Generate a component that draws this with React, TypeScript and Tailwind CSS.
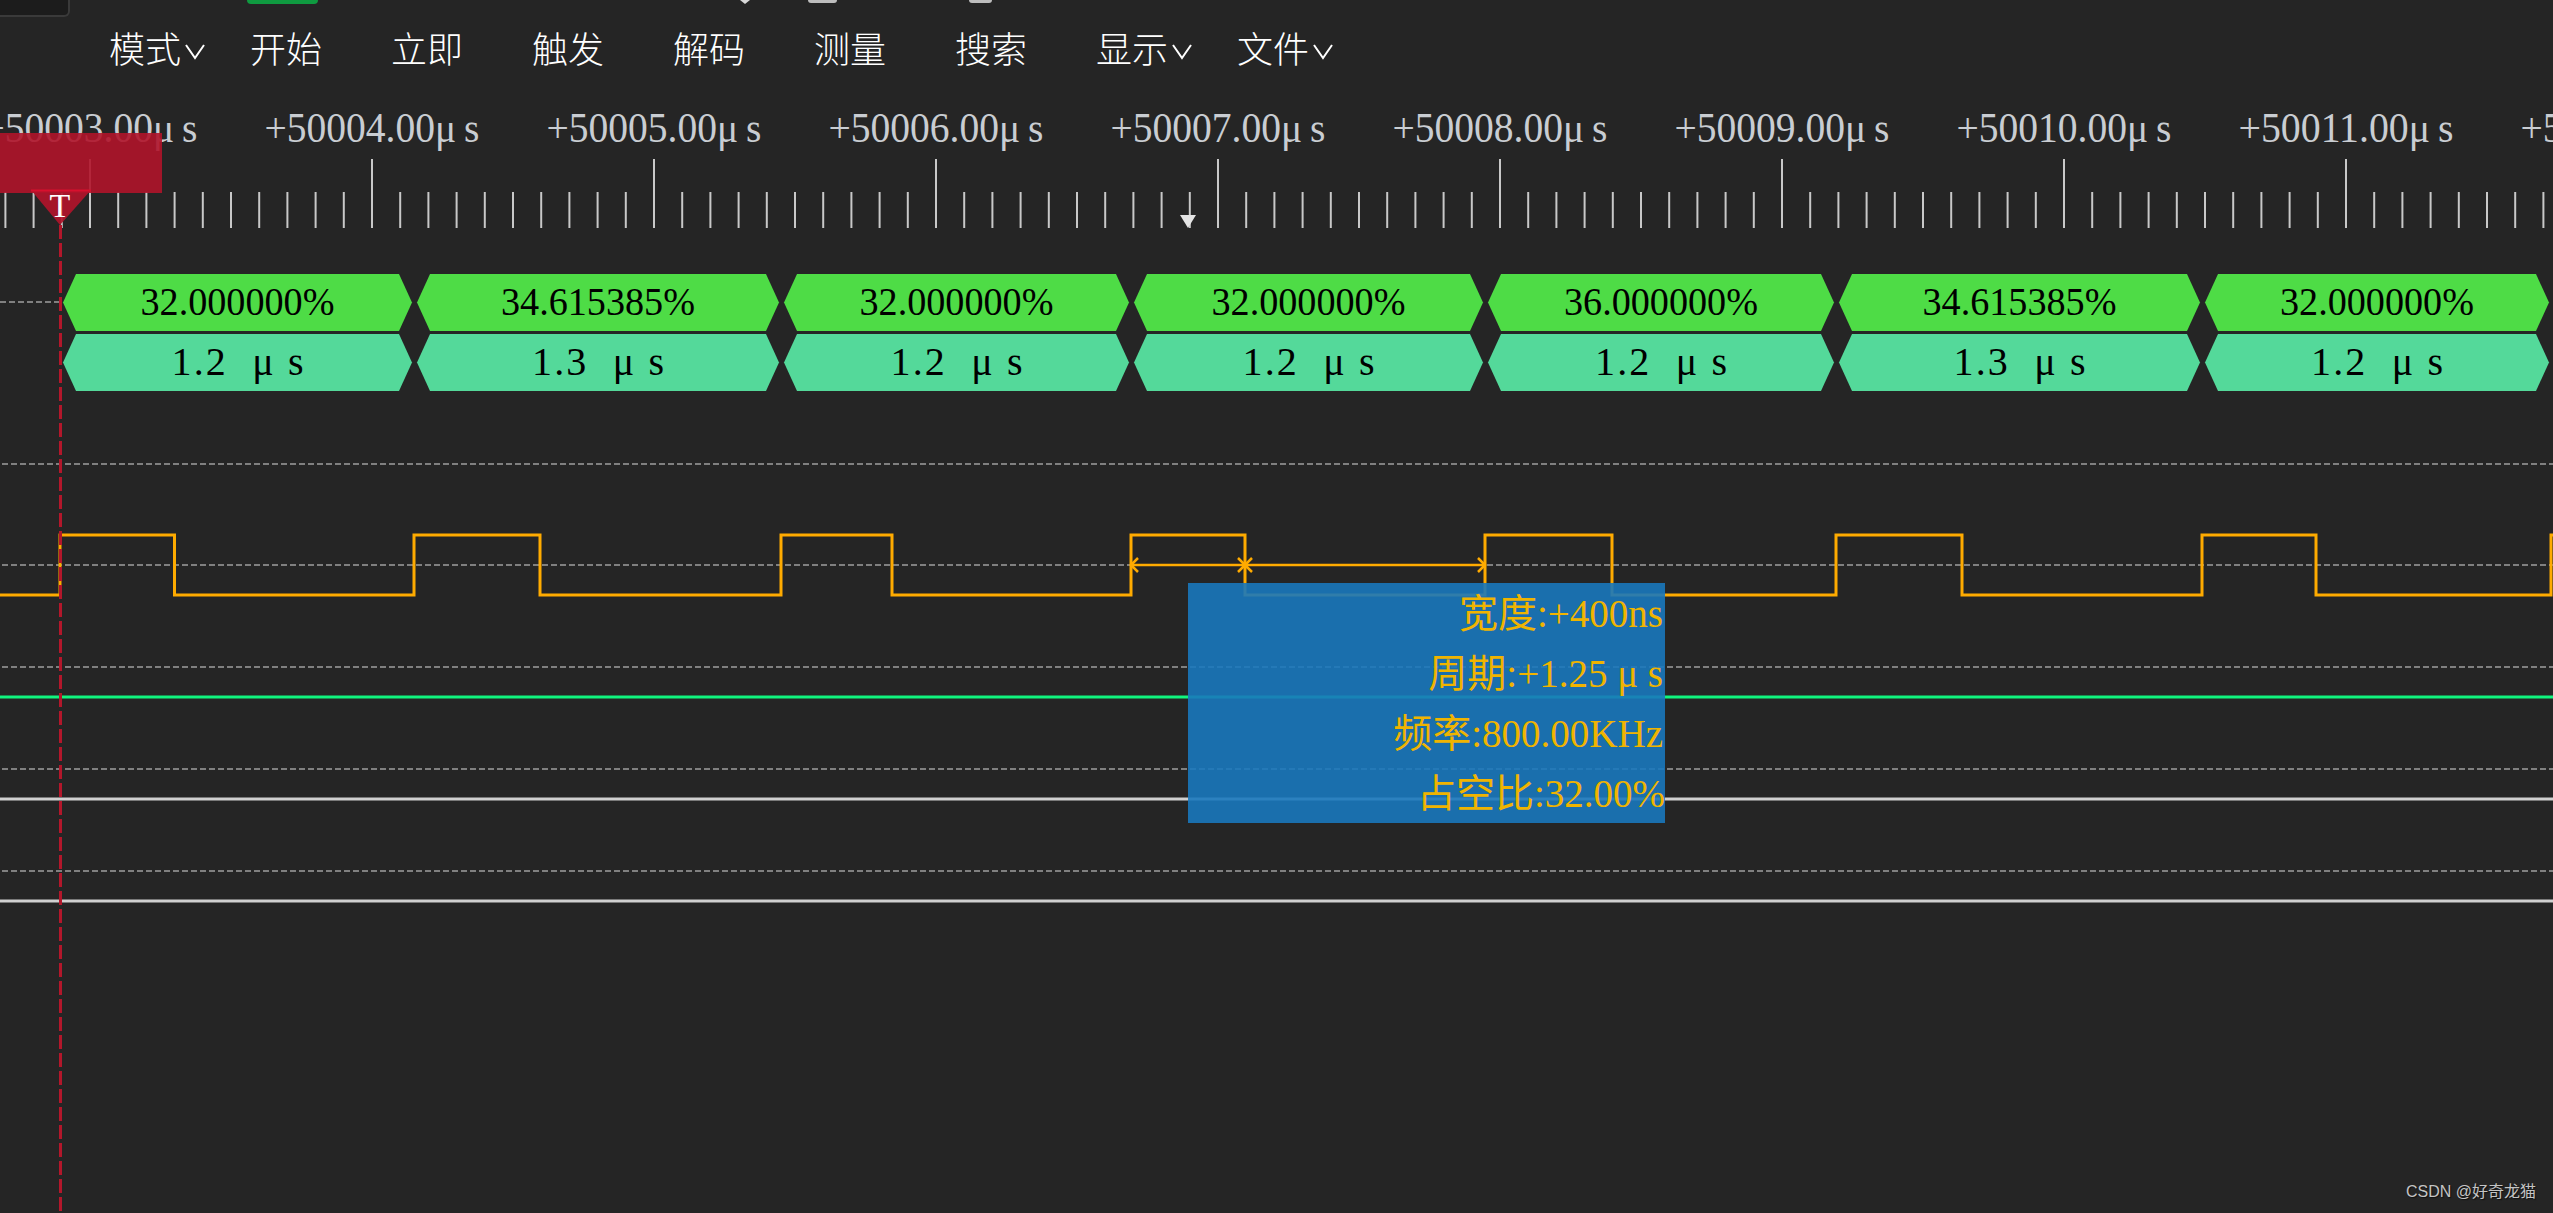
import React from "react";

const R = [60, 414, 781, 1131, 1485, 1836, 2202, 2551];
const F = [174.5, 540, 892, 1245, 1612, 1962, 2316];
const TOP = ["32.000000%", "34.615385%", "32.000000%", "32.000000%", "36.000000%", "34.615385%", "32.000000%"];
const BOT = ["1.2", "1.3", "1.2", "1.2", "1.2", "1.3", "1.2"];
const MENU: { t: string; dd?: boolean }[] = [
  { t: "模式", dd: true },
  { t: "开始" },
  { t: "立即" },
  { t: "触发" },
  { t: "解码" },
  { t: "测量" },
  { t: "搜索" },
  { t: "显示", dd: true },
  { t: "文件", dd: true },
];

const SERIF = "'Liberation Serif', 'Noto Sans CJK SC', serif";

function wavePoints() {
  const pts: string[] = ["-4,595"];
  for (let i = 0; i < R.length; i++) {
    pts.push(`${R[i]},595`, `${R[i]},535`);
    if (i < F.length) pts.push(`${F[i]},535`, `${F[i]},595`);
    else pts.push(`2560,535`);
  }
  return pts.join(" ");
}

function hex(l: number, r: number, y0: number, y1: number) {
  const m = (y0 + y1) / 2;
  const c = 13;
  return `${l},${m} ${l + c},${y0} ${r - c},${y0} ${r},${m} ${r - c},${y1} ${l + c},${y1}`;
}

function Chevron() {
  return (
    <svg width="24" height="20" viewBox="0 0 24 20" className="ml-[2px] mt-[8px]">
      <polyline points="3,4 12,17 21,4" fill="none" stroke="#ffffff" strokeWidth="2" />
    </svg>
  );
}

export default function App() {
  const ticks: React.ReactNode[] = [];
  for (let j = -3; ; j++) {
    const x = 90 + 28.2 * j;
    if (x > 2556) break;
    const major = j % 10 === 0;
    ticks.push(
      <line key={j} x1={x} x2={x} y1={major ? 159 : 192} y2={228} stroke="#c8c8c8" strokeWidth={2} />
    );
  }
  const labels: React.ReactNode[] = [];
  for (let k = -1; k <= 8; k++) {
    const x = 372 + 282 * k;
    labels.push(
      <text
        key={k}
        x={x - 107.5}
        y={142}
        fontFamily={SERIF}
        fontSize={42}
        fill="#c9cdd2"
        textLength={215}
        lengthAdjust="spacingAndGlyphs"
      >
        {`+${50004 + k}.00μ\u2009s`}
      </text>
    );
  }

  return (
    <div className="relative w-[2553px] h-[1213px] overflow-hidden bg-[#252525] flex flex-col">
      {/* cut-off toolbar strip */}
      <div className="h-[18px] flex items-start shrink-0">
        <div className="w-[70px] h-[17px] bg-[#1c1c1c] border-r-2 border-b-2 border-[#3a3a3a] rounded-br-[6px]" />
        <div className="ml-[177px] w-[71px] h-[4px] bg-[#0f9a40] rounded-b-full" />
        <svg width="10" height="4" viewBox="0 0 10 4" className="ml-[422px]">
          <polygon points="0,0 10,0 5,4" fill="#d8d8d8" />
        </svg>
        <div className="ml-[58px] w-[29px] h-[3px] bg-[#bdbdbd] rounded-b-full" />
        <div className="ml-[132px] w-[23px] h-[3px] bg-[#bdbdbd] rounded-b-full" />
      </div>

      {/* menu */}
      <div
        className="h-[58px] shrink-0 flex items-center pl-[109px] text-white text-[36px] font-light"
        style={{ fontFamily: "'Noto Sans CJK SC', sans-serif" }}
      >
        {MENU.map((m) => (
          <div key={m.t} className="w-[141px] flex items-center leading-none">
            <span>{m.t}</span>
            {m.dd && <Chevron />}
          </div>
        ))}
      </div>

      {/* chart */}
      <div className="flex-1 relative">
        <svg width="2553" height="1137" viewBox="0 76 2553 1137" className="block">
          {labels}
          {ticks}

          {/* cursor marker */}
          <polygon points="1180,215 1196,215 1188,228" fill="#e4e4e4" />

          {/* trigger marker */}
          <rect x={0} y={133} width={162} height={60} fill="#b0142a" opacity={0.9} />
          <polygon points="31,190 91,190 60,225" fill="#b0142a" opacity={0.92} />
          <line x1={31} x2={91} y1={190.5} y2={190.5} stroke="#d8102e" strokeWidth={2} />
          <text x={60} y={217} textAnchor="middle" fontFamily={SERIF} fontSize={34} fill="#ffffff">
            T
          </text>

          {/* dashed separators */}
          <line x1={0} x2={60} y1={302} y2={302} stroke="#808080" strokeWidth={2} strokeDasharray="6 3" />
          {[464, 565, 667, 769, 871].map((y) => (
            <line key={y} x1={2} x2={2553} y1={y} y2={y} stroke="#808080" strokeWidth={2} strokeDasharray="6 3" />
          ))}

          {/* channel lines */}
          <line x1={0} x2={2553} y1={697} y2={697} stroke="#10f57e" strokeWidth={3} />
          <line x1={0} x2={2553} y1={799} y2={799} stroke="#d0d0d0" strokeWidth={3} />
          <line x1={0} x2={2553} y1={901} y2={901} stroke="#d0d0d0" strokeWidth={3} />

          {/* decode rows */}
          {TOP.map((t, i) => {
            const l = R[i] + 3;
            const r = R[i + 1] - 2;
            const c = (l + r) / 2;
            return (
              <g key={i}>
                <polygon points={hex(l, r, 274, 331)} fill="#4edc46" />
                <polygon points={hex(l, r, 334, 391)} fill="#54d99a" />
                <text
                  x={c}
                  y={315}
                  textAnchor="middle"
                  fontFamily={SERIF}
                  fontSize={40}
                  fill="#000000"
                  textLength={194}
                  lengthAdjust="spacingAndGlyphs"
                >
                  {t}
                </text>
                <text
                  x={c}
                  y={375}
                  textAnchor="middle"
                  fontFamily={SERIF}
                  fontSize={40}
                  fill="#000000"
                  textLength={132}
                  lengthAdjust="spacing"
                  xmlSpace="preserve"
                >
                  {`${BOT[i]}  μ s`}
                </text>
              </g>
            );
          })}

          {/* waveform */}
          <polyline points={wavePoints()} fill="none" stroke="#ffab00" strokeWidth={3} strokeLinejoin="miter" />

          {/* trigger vertical line */}
          <line x1={60.5} x2={60.5} y1={225} y2={1213} stroke="#b3172b" strokeWidth={3} strokeDasharray="14 4" />

          {/* measurement */}
          <g stroke="#ffab00" strokeWidth={2.5} fill="none">
            <line x1={1131} x2={1485} y1={565} y2={565} />
            <polyline points="1138,558 1131,565 1138,572" />
            <line x1={1238} y1={558} x2={1252} y2={572} />
            <line x1={1238} y1={572} x2={1252} y2={558} />
            <polyline points="1478,558 1485,565 1478,572" />
          </g>
        </svg>
      </div>

      {/* measurement tooltip */}
      <div
        className="absolute left-[1188px] top-[583px] w-[477px] h-[240px] bg-[#1a78bc]/90 text-[#f0b400] text-[39px] leading-none flex flex-col"
        style={{ fontFamily: SERIF }}
      >
        <div className="h-[60px] flex items-center justify-end pr-[2px]">宽度:+400ns</div>
        <div className="h-[60px] flex items-center justify-end pr-[2px] whitespace-pre">周期:+1.25 μ s</div>
        <div className="h-[60px] flex items-center justify-end pr-[2px]">频率:800.00KHz</div>
        <div className="h-[60px] flex items-center justify-end pr-[0px]">占空比:32.00%</div>
      </div>

      {/* watermark */}
      <div
        className="absolute right-[17px] bottom-[9px] text-[16px] text-[#c4c4c4] [text-shadow:1px_1px_1px_#111]"
        style={{ fontFamily: "'Liberation Sans', 'Noto Sans CJK SC', sans-serif" }}
      >
        CSDN @好奇龙猫
      </div>
    </div>
  );
}
